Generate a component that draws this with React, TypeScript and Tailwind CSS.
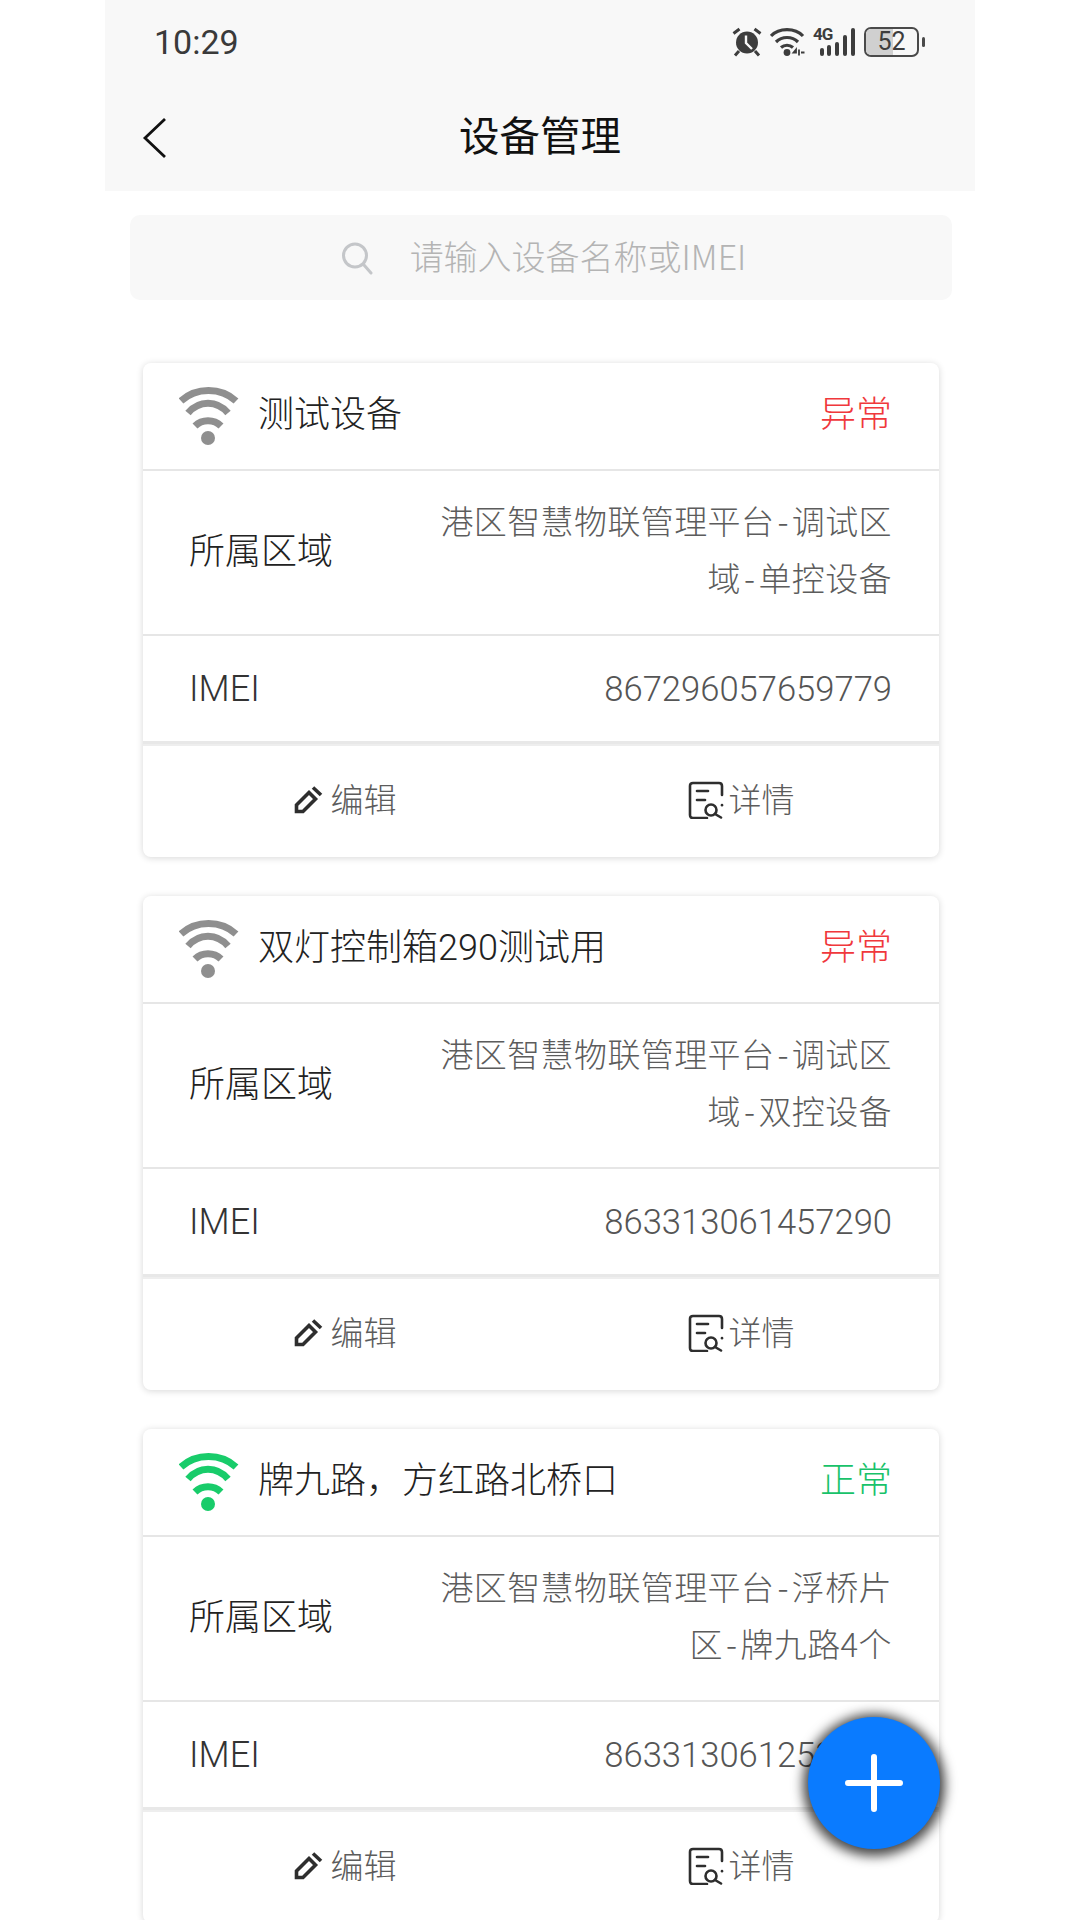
const ROBOTO_FIRST = "font-['Roboto','Noto_Sans_CJK_SC','Noto_Sans',sans-serif]";
const CJK_FIRST = "font-['Noto_Sans_CJK_SC','Noto_Sans',sans-serif]";

function WifiIcon({ color }: { color: string }) {
  return (
    <svg width="60" height="60" viewBox="0 0 60 60" fill="none" className="shrink-0">
      <path d="M2 15 C17 1 42 1 57 15" stroke={color} strokeWidth="7" />
      <path d="M9 27 C20 14 38 14 49 27" stroke={color} strokeWidth="7" />
      <path d="M16 40 C23 33 35 33 42 40" stroke={color} strokeWidth="7" />
      <circle cx="29" cy="52" r="7" fill={color} />
    </svg>
  );
}

function PencilIcon() {
  return (
    <svg width="30" height="30" viewBox="0 0 30 30" fill="none" className="mb-[3px] shrink-0" stroke="#2e2e2e" strokeWidth="3.6">
      <path d="M2.5 21 L15 8.5 L21.5 15 L9 27.5 L2.5 27.5 Z" strokeLinejoin="miter" />
      <path d="M19 3.5 L27 11" />
    </svg>
  );
}

function DetailIcon() {
  return (
    <svg width="36" height="38" viewBox="0 0 36 38" fill="none" className="shrink-0" stroke="#2e2e2e" strokeWidth="2.6" strokeLinecap="round">
      <path d="M19 37 H5 Q2 37 2 34 V5 Q2 2 5 2 H31 Q34 2 34 5 V14" />
      <path d="M9 10 H20" />
      <path d="M9 19 H17" />
      <circle cx="23" cy="29" r="5.5" />
      <path d="M27 33 L33 36.5" />
      <path d="M34 24 V24.2" />
    </svg>
  );
}

function StatusIcons() {
  return (
    <div className="flex items-center text-[#3d3d3d]">
      <svg width="30" height="30" viewBox="0 0 30 30" className="shrink-0">
        <circle cx="15" cy="15.5" r="11" fill="#3d3d3d" />
        <path d="M14 8.5 V16 L20 22" stroke="#f8f8f8" strokeWidth="2.4" fill="none" />
        <path d="M1.5 6.5 L7.5 2 M28.5 6.5 L22.5 2 M7 24 L3 28.5 M23 24 L27 28.5" stroke="#3d3d3d" strokeWidth="3" />
      </svg>
      <svg width="36" height="30" viewBox="0 0 36 30" fill="none" className="ml-[8px] shrink-0" stroke="#3d3d3d">
        <path d="M1 9 C9 0.5 25 0.5 33 9" strokeWidth="3.2" />
        <path d="M6 15 C12 9 22 9 28 15" strokeWidth="3.2" />
        <path d="M11 20.5 C14.5 17.5 19.5 17.5 23 20.5" strokeWidth="3.2" />
        <circle cx="17" cy="25.5" r="3.4" fill="#3d3d3d" stroke="none" />
        <path d="M26 22.5 L23.5 25.5 H26 Z M29 22.5 V28.5 M31 25.5 H34.5" strokeWidth="1.8" />
      </svg>
      <div className="relative ml-[7px] h-[30px] w-[43px] shrink-0">
        <span className="absolute left-0 top-[-1px] font-['Roboto',sans-serif] text-[17px] font-bold leading-[16px] tracking-[-1px]">4G</span>
        <svg width="43" height="30" viewBox="0 0 43 30" className="absolute left-0 top-0">
          <rect x="7" y="21" width="4" height="8" rx="2" fill="#3d3d3d" />
          <rect x="14" y="18" width="4" height="11" rx="2" fill="#3d3d3d" />
          <rect x="22" y="15" width="4" height="14" rx="2" fill="#3d3d3d" />
          <rect x="30" y="8" width="4" height="21" rx="2" fill="#3d3d3d" />
          <rect x="38" y="1" width="4" height="28" rx="2" fill="#3d3d3d" />
        </svg>
      </div>
      <div className="relative ml-[8px] flex h-[30px] w-[55px] items-center justify-center overflow-hidden rounded-[7px] border-2 border-[#4a4a4a] bg-[#f8f8f8]">
        <div className="absolute bottom-0 left-0 top-0 w-[52%] bg-[#d0d0d0]" />
        <span className="relative font-['Roboto',sans-serif] text-[25px] leading-[26px]">52</span>
      </div>
      <div className="ml-[3px] h-[10px] w-[3px] rounded-sm bg-[#4a4a4a]" />
    </div>
  );
}

type Device = { name: string; status: string; ok: boolean; l1: [string, string]; l2: [string, string]; imei: string };

const devices: Device[] = [
  { name: "测试设备", status: "异常", ok: false, l1: ["港区智慧物联管理平台", "调试区"], l2: ["域", "单控设备"], imei: "867296057659779" },
  { name: "双灯控制箱290测试用", status: "异常", ok: false, l1: ["港区智慧物联管理平台", "调试区"], l2: ["域", "双控设备"], imei: "863313061457290" },
  { name: "牌九路，方红路北桥口", status: "正常", ok: true, l1: ["港区智慧物联管理平台", "浮桥片"], l2: ["区", "牌九路4个"], imei: "863313061253290" },
];

function Hyphenated({ parts }: { parts: [string, string] }) {
  return (
    <div>
      {parts[0]}
      <span className="px-[3px]">-</span>
      {parts[1]}
    </div>
  );
}

function Card({ d }: { d: Device }) {
  return (
    <div className="mb-[39px] ml-[38px] mr-[36px] h-[494px] shrink-0 rounded-[8px] bg-white shadow-[0_1px_7px_rgba(0,0,0,0.16)]">
      <div className="flex h-[108px] items-center border-b-2 border-[#e6e6e6] pl-[36px] pr-[47px]">
        <WifiIcon color={d.ok ? "#18cc6a" : "#8f8f8f"} />
        <span className="ml-[19px] pb-[2px] text-[36px] font-light leading-[50px] text-[#222]">{d.name}</span>
        <span className={`ml-auto pb-[2px] text-[36px] font-light leading-[50px] ${d.ok ? "text-[#18c26a]" : "text-[#f0383c]"}`}>{d.status}</span>
      </div>
      <div className="flex h-[165px] items-center justify-between border-b-2 border-[#e6e6e6] pl-[46px] pr-[47px]">
        <span className="pb-[1px] text-[36px] font-light leading-[50px] text-[#222]">所属区域</span>
        <div className={`${CJK_FIRST} pb-[7px] text-right text-[33px] font-light leading-[57px] tracking-[0.4px] text-[#5c5c5c]`}>
          <Hyphenated parts={d.l1} />
          <Hyphenated parts={d.l2} />
        </div>
      </div>
      <div className="flex h-[108px] items-center justify-between border-b-[3px] border-[#e8e8e8] pl-[46px] pr-[47px]">
        <span className="text-[36px] font-light leading-[50px] text-[#333]">IMEI</span>
        <span className="text-[34.6px] font-light leading-[50px] text-[#555]">{d.imei}</span>
      </div>
      <div className="flex h-[110px] items-center border-t-2 border-[#eeeeee]">
        <div className="flex flex-1 items-center justify-center pl-[4px] text-[33px] font-light leading-[50px] text-[#5c5c5c]">
          <PencilIcon />
          <span className="ml-[7px] pt-[2px]">编辑</span>
        </div>
        <div className="flex flex-1 items-center justify-center text-[33px] font-light leading-[50px] text-[#5c5c5c]">
          <DetailIcon />
          <span className="ml-[5px] pt-[2px]">详情</span>
        </div>
      </div>
    </div>
  );
}

export default function App() {
  return (
    <div className={`relative h-[1920px] w-[1080px] overflow-hidden bg-white ${ROBOTO_FIRST}`}>
      <div className="mx-[105px] flex h-full w-[870px] flex-col overflow-hidden">
        <div className="shrink-0 bg-[#f8f8f8]">
          <div className="flex h-[84px] items-center justify-between pl-[49px] pr-[50px]">
            <span className="font-['Roboto',sans-serif] text-[34px] text-[#3a3a3a]">10:29</span>
            <StatusIcons />
          </div>
          <div className="relative flex h-[107px] items-center justify-center">
            <svg width="26" height="42" viewBox="0 0 26 42" fill="none" className="absolute left-[37px] top-[33px]">
              <path d="M23 2 L3 21 L23 40" stroke="#111" strokeWidth="2.8" />
            </svg>
            <span className="pb-[1px] text-[40.5px] font-normal leading-[56px] text-[#111]">设备管理</span>
          </div>
        </div>
        <div className={`${CJK_FIRST} ml-[25px] mr-[23px] mt-[24px] flex h-[85px] shrink-0 items-center justify-center rounded-[10px] bg-[#f8f8f8] pl-[4px]`}>
          <svg width="34" height="34" viewBox="0 0 34 34" fill="none" stroke="#c4c6c9" strokeWidth="3" strokeLinecap="round">
            <circle cx="15" cy="14.5" r="11.5" />
            <path d="M24 24 L31 32" />
          </svg>
          <span className="ml-[36px] pb-[3px] text-[34px] font-light leading-[50px] text-[#b4b4b4]">请输入设备名称或IMEI</span>
        </div>
        <div className="mt-[63px] flex flex-col">
          {devices.map((d) => (
            <Card key={d.imei} d={d} />
          ))}
        </div>
      </div>
      <button className="absolute left-[808px] top-[1717px] flex h-[132px] w-[132px] items-center justify-center rounded-full bg-[#0a7bff] shadow-[0_2px_12px_5px_rgba(0,0,0,0.72)]">
        <svg width="58" height="58" viewBox="0 0 58 58" stroke="#fff" strokeWidth="6" strokeLinecap="round">
          <path d="M29 3 V55 M3 29 H55" />
        </svg>
      </button>
    </div>
  );
}
